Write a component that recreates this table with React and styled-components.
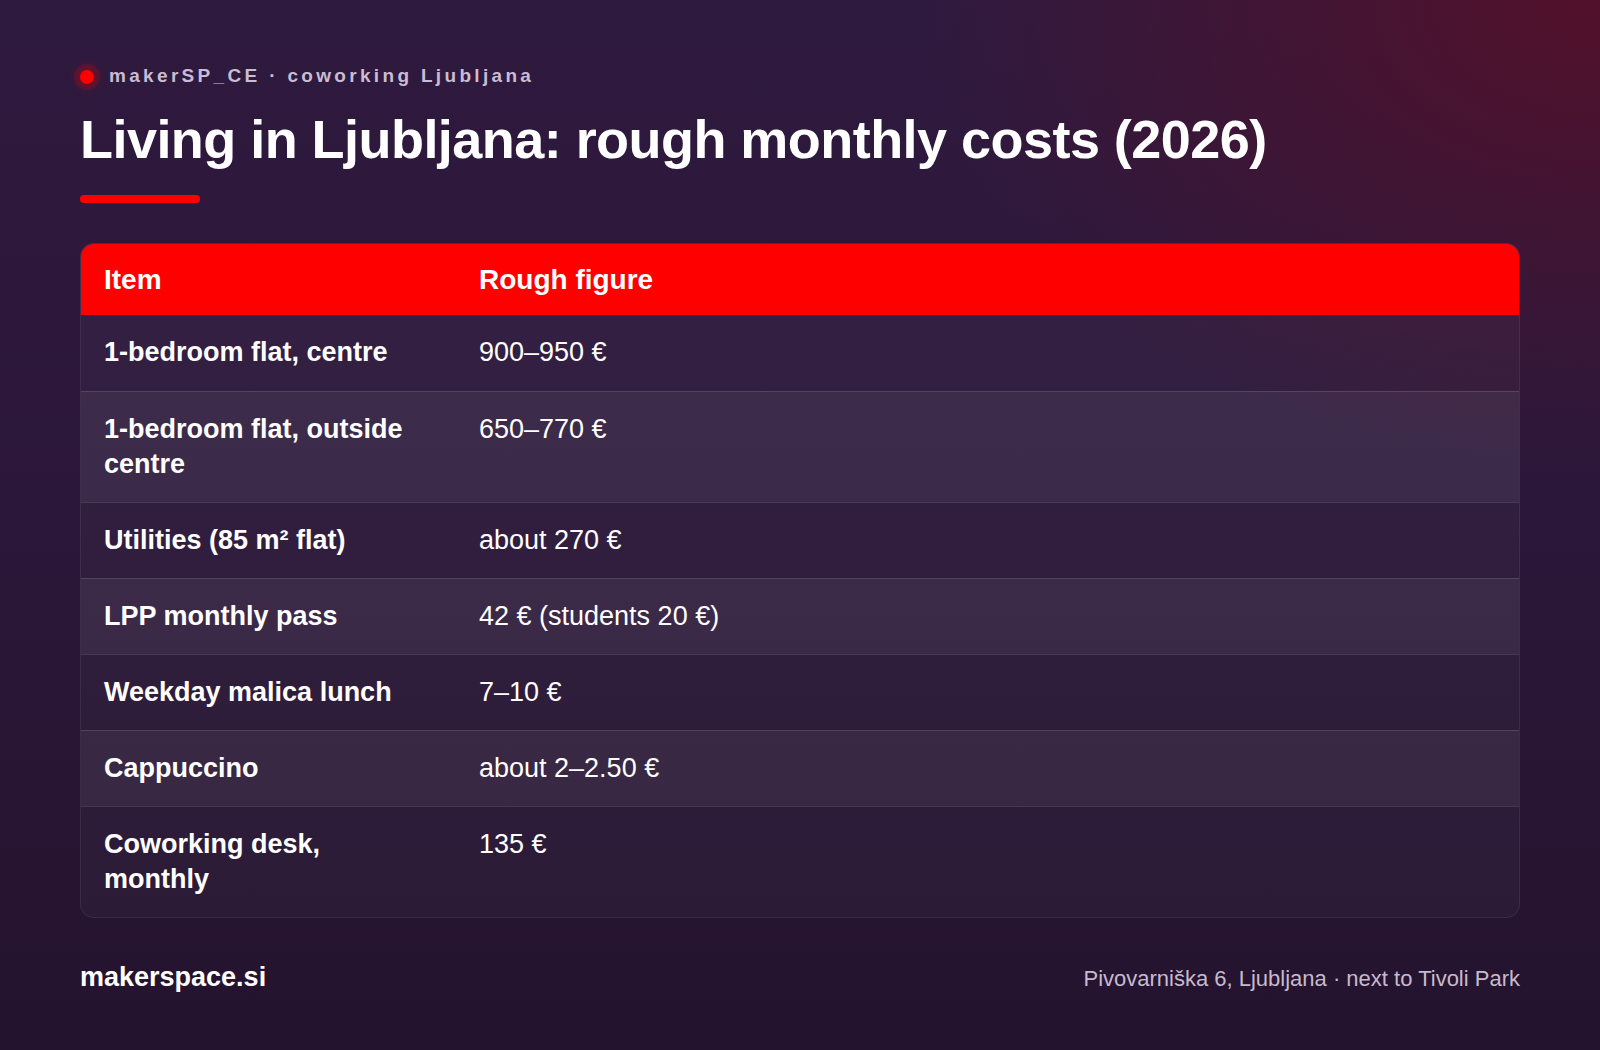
import React from 'react';
import styled, { createGlobalStyle } from 'styled-components';

const GlobalStyle = createGlobalStyle`
    html, body {
        margin: 0;
        padding: 0;
        background: #2a1637;
    }
    * {
        box-sizing: border-box;
    }
`

const rows = [
    { item: '1-bedroom flat, centre', figure: '900–950 €' },
    { item: '1-bedroom flat, outside centre', figure: '650–770 €' },
    { item: 'Utilities (85 m² flat)', figure: 'about 270 €' },
    { item: 'LPP monthly pass', figure: '42 € (students 20 €)' },
    { item: 'Weekday malica lunch', figure: '7–10 €' },
    { item: 'Cappuccino', figure: 'about 2–2.50 €' },
    { item: 'Coworking desk, monthly', figure: '135 €' },
]

const App = () => {
    return(<Page>
        <GlobalStyle />
        <Brand>
            <Dot />
            <BrandText>makerSP_CE · coworking Ljubljana</BrandText>
        </Brand>
        <Title>Living in Ljubljana: rough monthly costs (2026)</Title>
        <Accent />
        <Table>
            <HeadRow>
                <HeadCell>Item</HeadCell>
                <HeadCell>Rough figure</HeadCell>
            </HeadRow>
            {rows.map((row, i) => (
                <Row key={row.item} shaded={i % 2 === 1}>
                    <ItemCell>{row.item}</ItemCell>
                    <FigureCell>{row.figure}</FigureCell>
                </Row>
            ))}
        </Table>
        <Footer>
            <Site>makerspace.si</Site>
            <Address>Pivovarniška 6, Ljubljana · next to Tivoli Park</Address>
        </Footer>
    </Page>);
}

export default App;

const Page = styled.div`
    width: 1600px;
    min-height: 1050px;
    padding: 64px 80px 0;
    font-family: "Liberation Sans", Arial, sans-serif;
    color: #ffffff;
    background:
        radial-gradient(ellipse 900px 620px at 100% 0%, rgba(84, 16, 42, 0.95), rgba(84, 16, 42, 0) 75%),
        linear-gradient(180deg, #2f1a3f 0%, #2b1739 50%, #24132e 100%);
`

const Brand = styled.div`
    display: flex;
    align-items: center;
    gap: 15px;
    height: 24px;
`

const Dot = styled.span`
    width: 14px;
    height: 14px;
    border-radius: 50%;
    background: #ff0000;
    box-shadow: 0 0 0 6px rgba(255, 0, 0, 0.18), 0 0 10px 6px rgba(255, 0, 0, 0.1);
    margin-top: 2px;
`

const BrandText = styled.span`
    font-size: 19px;
    line-height: 24px;
    font-weight: 700;
    letter-spacing: 0.175em;
    color: #cbbbd3;
`

const Title = styled.h1`
    margin: 20px 0 0;
    font-size: 54px;
    line-height: 1.15;
    font-weight: 700;
    letter-spacing: -0.01em;
`

const Accent = styled.div`
    width: 120px;
    height: 8px;
    border-radius: 4px;
    background: #ff0000;
    margin-top: 25px;
`

const Table = styled.div`
    margin-top: 40px;
    border-radius: 14px;
    overflow: hidden;
    border: 1px solid rgba(255, 255, 255, 0.07);
    background: rgba(255, 255, 255, 0.03);
`

const HeadRow = styled.div`
    display: grid;
    grid-template-columns: 374px 1fr;
    background: #ff0000;
`

const HeadCell = styled.div`
    padding: 17.5px 28px 17.5px 23px;
    font-size: 28px;
    line-height: 1.3;
    font-weight: 700;
    & + & {
        padding-left: 24px;
    }
`

const Row = styled.div`
    display: grid;
    grid-template-columns: 374px 1fr;
    background: ${props => props.shaded ? 'rgba(255, 255, 255, 0.055)' : 'transparent'};
    & + & {
        border-top: 1px solid rgba(255, 255, 255, 0.12);
    }
`

const ItemCell = styled.div`
    padding: 20px 28px 20px 23px;
    font-size: 27px;
    line-height: 1.3;
    font-weight: 700;
`

const FigureCell = styled.div`
    padding: 20px 24px;
    font-size: 27px;
    line-height: 1.3;
    font-weight: 400;
`

const Footer = styled.div`
    display: flex;
    justify-content: space-between;
    align-items: baseline;
    margin-top: 42px;
`

const Site = styled.div`
    font-size: 27px;
    line-height: 1.3;
    font-weight: 700;
`

const Address = styled.div`
    font-size: 22px;
    line-height: 1.3;
    color: #c8bacd;
`
